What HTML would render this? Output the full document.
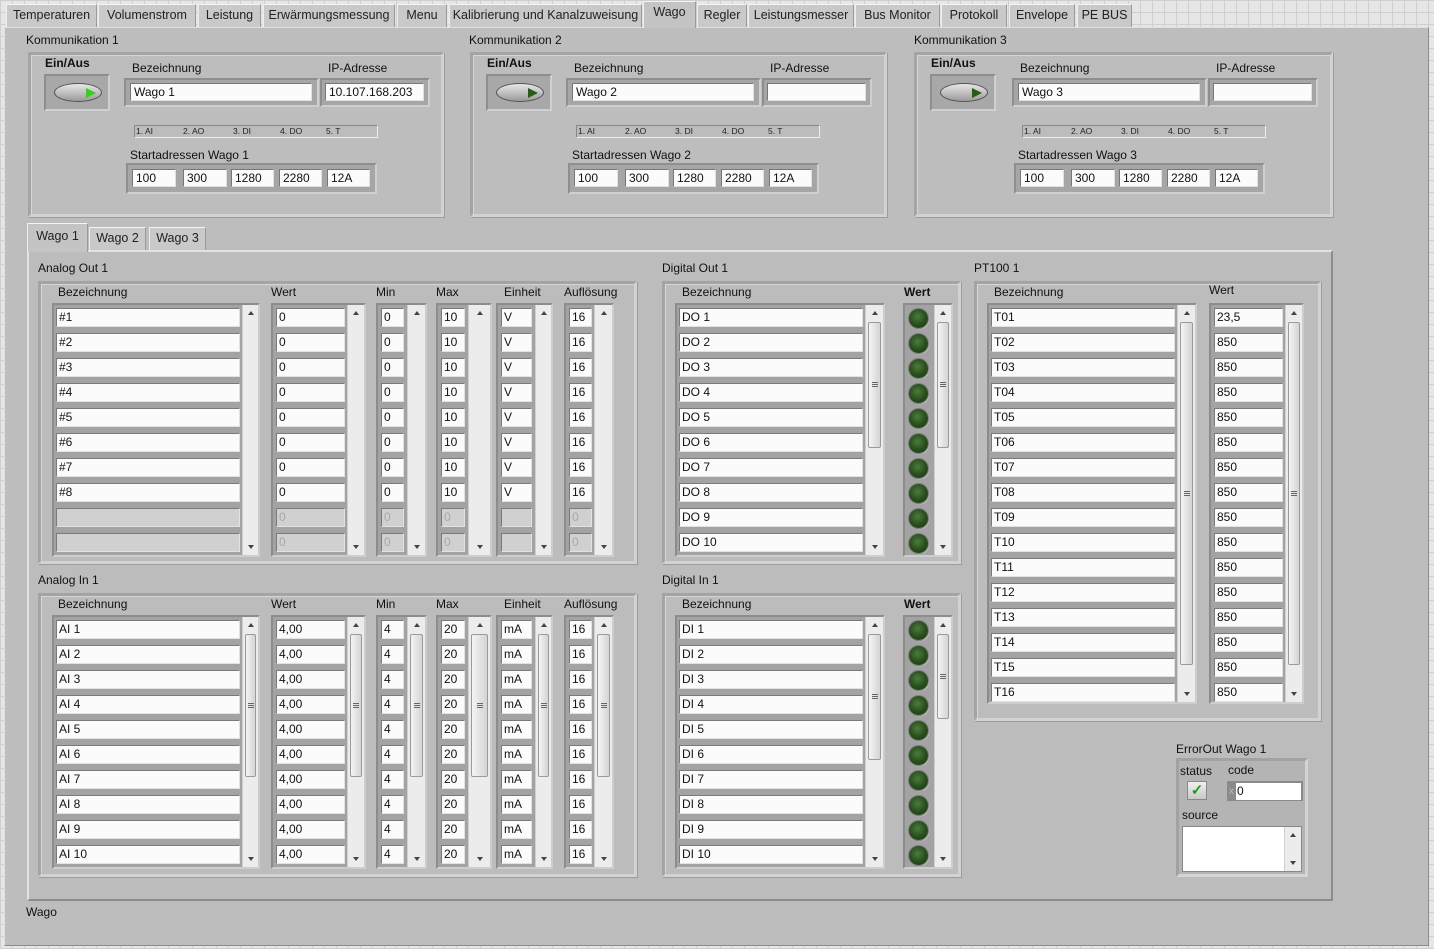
<!DOCTYPE html>
<html><head><meta charset="utf-8">
<style>
*{box-sizing:border-box;margin:0;padding:0}
body{width:1434px;height:949px;position:relative;overflow:hidden;font-family:"Liberation Sans",sans-serif;font-size:12px;color:#111;
background-color:#e6e6e6;background-image:linear-gradient(#cfcfcf 1px,transparent 1px),linear-gradient(90deg,#cfcfcf 1px,transparent 1px);background-size:12px 12px}
.a{position:absolute}
.tab{position:absolute;top:4px;height:23px;background:#c9c9c9;border:1px solid #9a9a9a;border-bottom:none;border-top-color:#f4f4f4;border-left-color:#eee;text-align:center;line-height:21px;font-size:12.5px;color:#222}
.tab.sel{top:1px;height:27px;background:#c4c4c4;z-index:2}
#main{position:absolute;left:4px;top:27px;width:1425px;height:919px;background:#bdbdbd;border:1px solid #8c8c8c;border-top-color:#e0e0e0;border-left-color:#e0e0e0}
.frm{position:absolute;border:3px solid #a4a4a4;border-right-color:#d2d2d2;border-bottom-color:#d2d2d2;box-shadow:inset 1px 1px 0 #d6d6d6,1px 1px 0 #9c9c9c}
.lb{position:absolute;font-size:12px;white-space:nowrap}
.b{font-weight:bold}
.box{position:absolute;background:#a6a6a6;border:2px solid #8e8e8e;border-right-color:#cfcfcf;border-bottom-color:#cfcfcf}
.in{position:absolute;background:#fbfbfb;border:1px solid #777;border-right-color:#e0e0e0;border-bottom-color:#e0e0e0;padding-left:3px;line-height:16px;font-size:12px;height:18px;overflow:hidden}
.col{position:absolute;background:#a3a3a3;border:2px solid #8c8c8c;border-right-color:#cdcdcd;border-bottom-color:#cdcdcd}
.col .c{position:absolute;height:19px;background:#fbfbfb;border:1px solid #7a7a7a;border-right-color:#e2e2e2;border-bottom-color:#e2e2e2;padding-left:2px;line-height:17px;font-size:12px;overflow:hidden;white-space:nowrap}
.col .c.d{background:#d0d0d0;color:#a8a8a8}
.sb{position:absolute;background:#ececec;border-left:1px solid #cfcfcf}
.sb:before{content:"";position:absolute;left:50%;top:6px;margin-left:-3px;border:3px solid transparent;border-bottom:4px solid #444;border-top:none}
.sb:after{content:"";position:absolute;left:50%;bottom:6px;margin-left:-3px;border:3px solid transparent;border-top:4px solid #444;border-bottom:none}
.th{position:absolute;left:2px;right:2px;background:linear-gradient(90deg,#f4f4f4,#d4d4d4);border:1px solid #9a9a9a;border-radius:2px}
.th i{position:absolute;left:50%;top:50%;width:6px;height:5px;margin:-3px 0 0 -3px;border-top:1px solid #666;border-bottom:1px solid #666}
.th i:after{content:"";position:absolute;left:0;right:0;top:1px;border-top:1px solid #666}
.led{position:absolute;left:4px;width:19px;height:19px;border-radius:50%;background:radial-gradient(circle at 45% 40%,#4f7a3e 0,#264d1b 55%,#183312 100%);box-shadow:0 0 0 1px #7d7d7d,1px 1px 1px #ddd}
.btnbox{position:absolute;width:66px;height:37px;background:#a8a8a8;border:2px solid #8e8e8e;border-right-color:#d0d0d0;border-bottom-color:#d0d0d0}
.pill{position:absolute;left:8px;top:7px;width:48px;height:19px;border-radius:50%;background:linear-gradient(#e8e8e8,#9a9a9a);border:1px solid #555}
.tri{position:absolute;left:31px;top:4px;border-left:10px solid #3ccc20;border-top:5px solid transparent;border-bottom:5px solid transparent}
.tri.off{border-left-color:#2a5a1a}
.strip{position:absolute;height:13px;background:#bcbcbc;border:1px solid #888;border-right-color:#eee;border-bottom-color:#eee;font-size:8.5px;line-height:11px;color:#222}
.strip span{position:absolute;top:0}
</style></head><body>

<div class="tab" style="left:6px;width:91px">Temperaturen</div>
<div class="tab" style="left:98px;width:98px">Volumenstrom</div>
<div class="tab" style="left:198px;width:63px">Leistung</div>
<div class="tab" style="left:263px;width:132px">Erwärmungsmessung</div>
<div class="tab" style="left:397px;width:50px">Menu</div>
<div class="tab" style="left:449px;width:193px">Kalibrierung und Kanalzuweisung</div>
<div class="tab sel" style="left:643px;width:53px">Wago</div>
<div class="tab" style="left:697px;width:50px">Regler</div>
<div class="tab" style="left:748px;width:106px">Leistungsmesser</div>
<div class="tab" style="left:855px;width:85px">Bus Monitor</div>
<div class="tab" style="left:941px;width:66px">Protokoll</div>
<div class="tab" style="left:1009px;width:66px">Envelope</div>
<div class="tab" style="left:1077px;width:55px">PE BUS</div>

<div id="main"></div>

<!-- Kommunikation groups -->
<div class="lb" style="left:26px;top:33px">Kommunikation 1</div>
<div class="frm" style="left:28px;top:52px;width:416px;height:165px"></div>
<div class="lb b" style="left:45px;top:56px">Ein/Aus</div>
<div class="btnbox" style="left:44px;top:74px"><div class="pill"><div class="tri"></div></div></div>
<div class="lb" style="left:132px;top:61px">Bezeichnung</div>
<div class="box" style="left:124px;top:78px;width:195px;height:29px"></div>
<div class="in" style="left:130px;top:83px;width:182px">Wago 1</div>
<div class="lb" style="left:328px;top:61px">IP-Adresse</div>
<div class="box" style="left:320px;top:78px;width:110px;height:29px"></div>
<div class="in" style="left:325px;top:83px;width:99px">10.107.168.203</div>
<div class="strip" style="left:134px;top:125px;width:244px"><span style="left:1px">1. AI</span><span style="left:48px">2. AO</span><span style="left:98px">3. DI</span><span style="left:145px">4. DO</span><span style="left:191px">5. T</span></div>
<div class="lb" style="left:130px;top:148px">Startadressen Wago 1</div>
<div class="box" style="left:126px;top:163px;width:251px;height:31px"></div>
<div class="in" style="left:132px;top:169px;width:44px">100</div>
<div class="in" style="left:183px;top:169px;width:44px">300</div>
<div class="in" style="left:231px;top:169px;width:43px">1280</div>
<div class="in" style="left:279px;top:169px;width:43px">2280</div>
<div class="in" style="left:327px;top:169px;width:43px">12A</div>

<div class="lb" style="left:469px;top:33px">Kommunikation 2</div>
<div class="frm" style="left:470px;top:52px;width:417px;height:165px"></div>
<div class="lb b" style="left:487px;top:56px">Ein/Aus</div>
<div class="btnbox" style="left:486px;top:74px"><div class="pill"><div class="tri off"></div></div></div>
<div class="lb" style="left:574px;top:61px">Bezeichnung</div>
<div class="box" style="left:566px;top:78px;width:195px;height:29px"></div>
<div class="in" style="left:572px;top:83px;width:182px">Wago 2</div>
<div class="lb" style="left:770px;top:61px">IP-Adresse</div>
<div class="box" style="left:762px;top:78px;width:110px;height:29px"></div>
<div class="in" style="left:767px;top:83px;width:99px"></div>
<div class="strip" style="left:576px;top:125px;width:244px"><span style="left:1px">1. AI</span><span style="left:48px">2. AO</span><span style="left:98px">3. DI</span><span style="left:145px">4. DO</span><span style="left:191px">5. T</span></div>
<div class="lb" style="left:572px;top:148px">Startadressen Wago 2</div>
<div class="box" style="left:568px;top:163px;width:251px;height:31px"></div>
<div class="in" style="left:574px;top:169px;width:44px">100</div>
<div class="in" style="left:625px;top:169px;width:44px">300</div>
<div class="in" style="left:673px;top:169px;width:43px">1280</div>
<div class="in" style="left:721px;top:169px;width:43px">2280</div>
<div class="in" style="left:769px;top:169px;width:43px">12A</div>

<div class="lb" style="left:914px;top:33px">Kommunikation 3</div>
<div class="frm" style="left:914px;top:52px;width:419px;height:165px"></div>
<div class="lb b" style="left:931px;top:56px">Ein/Aus</div>
<div class="btnbox" style="left:930px;top:74px"><div class="pill"><div class="tri off"></div></div></div>
<div class="lb" style="left:1020px;top:61px">Bezeichnung</div>
<div class="box" style="left:1012px;top:78px;width:195px;height:29px"></div>
<div class="in" style="left:1018px;top:83px;width:182px">Wago 3</div>
<div class="lb" style="left:1216px;top:61px">IP-Adresse</div>
<div class="box" style="left:1208px;top:78px;width:110px;height:29px"></div>
<div class="in" style="left:1213px;top:83px;width:99px"></div>
<div class="strip" style="left:1022px;top:125px;width:244px"><span style="left:1px">1. AI</span><span style="left:48px">2. AO</span><span style="left:98px">3. DI</span><span style="left:145px">4. DO</span><span style="left:191px">5. T</span></div>
<div class="lb" style="left:1018px;top:148px">Startadressen Wago 3</div>
<div class="box" style="left:1014px;top:163px;width:251px;height:31px"></div>
<div class="in" style="left:1020px;top:169px;width:44px">100</div>
<div class="in" style="left:1071px;top:169px;width:44px">300</div>
<div class="in" style="left:1119px;top:169px;width:43px">1280</div>
<div class="in" style="left:1167px;top:169px;width:43px">2280</div>
<div class="in" style="left:1215px;top:169px;width:43px">12A</div>

<!-- inner tab control -->
<div class="a" style="left:27px;top:250px;width:1306px;height:651px;background:#bcbcbc;border:2px solid #e2e2e2;border-right-color:#8c8c8c;border-bottom-color:#8c8c8c"></div>
<div class="tab sel" style="left:27px;top:223px;width:61px;height:29px;line-height:24px">Wago 1</div>
<div class="tab" style="left:89px;top:227px;width:57px">Wago 2</div>
<div class="tab" style="left:149px;top:227px;width:57px">Wago 3</div>

<!-- Analog Out 1 -->
<div class="lb" style="left:38px;top:261px">Analog Out 1</div>
<div class="frm" style="left:38px;top:281px;width:599px;height:283px"></div>
<div class="lb" style="left:58px;top:285px">Bezeichnung</div>
<div class="lb" style="left:271px;top:285px">Wert</div>
<div class="lb" style="left:376px;top:285px">Min</div>
<div class="lb" style="left:436px;top:285px">Max</div>
<div class="lb" style="left:504px;top:285px">Einheit</div>
<div class="lb" style="left:564px;top:285px">Auflösung</div>

<div class="col" style="left:52px;top:303px;width:208px;height:254px">
<div class="c" style="left:2px;top:3px;width:184px">#1</div><div class="c" style="left:2px;top:28px;width:184px">#2</div><div class="c" style="left:2px;top:53px;width:184px">#3</div><div class="c" style="left:2px;top:78px;width:184px">#4</div><div class="c" style="left:2px;top:103px;width:184px">#5</div><div class="c" style="left:2px;top:128px;width:184px">#6</div><div class="c" style="left:2px;top:153px;width:184px">#7</div><div class="c" style="left:2px;top:178px;width:184px">#8</div><div class="c d" style="left:2px;top:203px;width:184px"></div><div class="c d" style="left:2px;top:228px;width:184px"></div>
<div class="sb" style="left:188px;top:0;width:16px;height:250px"></div></div>

<div class="col" style="left:271px;top:303px;width:95px;height:254px">
<div class="c" style="left:3px;top:3px;width:69px">0</div><div class="c" style="left:3px;top:28px;width:69px">0</div><div class="c" style="left:3px;top:53px;width:69px">0</div><div class="c" style="left:3px;top:78px;width:69px">0</div><div class="c" style="left:3px;top:103px;width:69px">0</div><div class="c" style="left:3px;top:128px;width:69px">0</div><div class="c" style="left:3px;top:153px;width:69px">0</div><div class="c" style="left:3px;top:178px;width:69px">0</div><div class="c d" style="left:3px;top:203px;width:69px">0</div><div class="c d" style="left:3px;top:228px;width:69px">0</div>
<div class="sb" style="left:74px;top:0;width:17px;height:250px"></div></div>

<div class="col" style="left:376px;top:303px;width:51px;height:254px">
<div class="c" style="left:3px;top:3px;width:23px">0</div><div class="c" style="left:3px;top:28px;width:23px">0</div><div class="c" style="left:3px;top:53px;width:23px">0</div><div class="c" style="left:3px;top:78px;width:23px">0</div><div class="c" style="left:3px;top:103px;width:23px">0</div><div class="c" style="left:3px;top:128px;width:23px">0</div><div class="c" style="left:3px;top:153px;width:23px">0</div><div class="c" style="left:3px;top:178px;width:23px">0</div><div class="c d" style="left:3px;top:203px;width:23px">0</div><div class="c d" style="left:3px;top:228px;width:23px">0</div>
<div class="sb" style="left:29px;top:0;width:18px;height:250px"></div></div>

<div class="col" style="left:436px;top:303px;width:56px;height:254px">
<div class="c" style="left:3px;top:3px;width:24px">10</div><div class="c" style="left:3px;top:28px;width:24px">10</div><div class="c" style="left:3px;top:53px;width:24px">10</div><div class="c" style="left:3px;top:78px;width:24px">10</div><div class="c" style="left:3px;top:103px;width:24px">10</div><div class="c" style="left:3px;top:128px;width:24px">10</div><div class="c" style="left:3px;top:153px;width:24px">10</div><div class="c" style="left:3px;top:178px;width:24px">10</div><div class="c d" style="left:3px;top:203px;width:24px">0</div><div class="c d" style="left:3px;top:228px;width:24px">0</div>
<div class="sb" style="left:30px;top:0;width:22px;height:250px"></div></div>

<div class="col" style="left:496px;top:303px;width:57px;height:254px">
<div class="c" style="left:3px;top:3px;width:31px">V</div><div class="c" style="left:3px;top:28px;width:31px">V</div><div class="c" style="left:3px;top:53px;width:31px">V</div><div class="c" style="left:3px;top:78px;width:31px">V</div><div class="c" style="left:3px;top:103px;width:31px">V</div><div class="c" style="left:3px;top:128px;width:31px">V</div><div class="c" style="left:3px;top:153px;width:31px">V</div><div class="c" style="left:3px;top:178px;width:31px">V</div><div class="c d" style="left:3px;top:203px;width:31px"></div><div class="c d" style="left:3px;top:228px;width:31px"></div>
<div class="sb" style="left:37px;top:0;width:16px;height:250px"></div></div>

<div class="col" style="left:564px;top:303px;width:50px;height:254px">
<div class="c" style="left:3px;top:3px;width:23px">16</div><div class="c" style="left:3px;top:28px;width:23px">16</div><div class="c" style="left:3px;top:53px;width:23px">16</div><div class="c" style="left:3px;top:78px;width:23px">16</div><div class="c" style="left:3px;top:103px;width:23px">16</div><div class="c" style="left:3px;top:128px;width:23px">16</div><div class="c" style="left:3px;top:153px;width:23px">16</div><div class="c" style="left:3px;top:178px;width:23px">16</div><div class="c d" style="left:3px;top:203px;width:23px">0</div><div class="c d" style="left:3px;top:228px;width:23px">0</div>
<div class="sb" style="left:28px;top:0;width:18px;height:250px"></div></div>

<!-- Analog In 1 -->
<div class="lb" style="left:38px;top:573px">Analog In 1</div>
<div class="frm" style="left:38px;top:593px;width:599px;height:284px"></div>
<div class="lb" style="left:58px;top:597px">Bezeichnung</div>
<div class="lb" style="left:271px;top:597px">Wert</div>
<div class="lb" style="left:376px;top:597px">Min</div>
<div class="lb" style="left:436px;top:597px">Max</div>
<div class="lb" style="left:504px;top:597px">Einheit</div>
<div class="lb" style="left:564px;top:597px">Auflösung</div>

<div class="col" style="left:52px;top:615px;width:208px;height:254px">
<div class="c" style="left:2px;top:3px;width:184px">AI 1</div><div class="c" style="left:2px;top:28px;width:184px">AI 2</div><div class="c" style="left:2px;top:53px;width:184px">AI 3</div><div class="c" style="left:2px;top:78px;width:184px">AI 4</div><div class="c" style="left:2px;top:103px;width:184px">AI 5</div><div class="c" style="left:2px;top:128px;width:184px">AI 6</div><div class="c" style="left:2px;top:153px;width:184px">AI 7</div><div class="c" style="left:2px;top:178px;width:184px">AI 8</div><div class="c" style="left:2px;top:203px;width:184px">AI 9</div><div class="c" style="left:2px;top:228px;width:184px">AI 10</div>
<div class="sb" style="left:188px;top:0;width:16px;height:250px"><div class="th" style="top:17px;height:143px"><i></i></div></div></div>

<div class="col" style="left:271px;top:615px;width:95px;height:254px">
<div class="c" style="left:3px;top:3px;width:69px">4,00</div><div class="c" style="left:3px;top:28px;width:69px">4,00</div><div class="c" style="left:3px;top:53px;width:69px">4,00</div><div class="c" style="left:3px;top:78px;width:69px">4,00</div><div class="c" style="left:3px;top:103px;width:69px">4,00</div><div class="c" style="left:3px;top:128px;width:69px">4,00</div><div class="c" style="left:3px;top:153px;width:69px">4,00</div><div class="c" style="left:3px;top:178px;width:69px">4,00</div><div class="c" style="left:3px;top:203px;width:69px">4,00</div><div class="c" style="left:3px;top:228px;width:69px">4,00</div>
<div class="sb" style="left:74px;top:0;width:17px;height:250px"><div class="th" style="top:17px;height:143px"><i></i></div></div></div>

<div class="col" style="left:376px;top:615px;width:51px;height:254px">
<div class="c" style="left:3px;top:3px;width:23px">4</div><div class="c" style="left:3px;top:28px;width:23px">4</div><div class="c" style="left:3px;top:53px;width:23px">4</div><div class="c" style="left:3px;top:78px;width:23px">4</div><div class="c" style="left:3px;top:103px;width:23px">4</div><div class="c" style="left:3px;top:128px;width:23px">4</div><div class="c" style="left:3px;top:153px;width:23px">4</div><div class="c" style="left:3px;top:178px;width:23px">4</div><div class="c" style="left:3px;top:203px;width:23px">4</div><div class="c" style="left:3px;top:228px;width:23px">4</div>
<div class="sb" style="left:29px;top:0;width:18px;height:250px"><div class="th" style="top:17px;height:143px"><i></i></div></div></div>

<div class="col" style="left:436px;top:615px;width:56px;height:254px">
<div class="c" style="left:3px;top:3px;width:24px">20</div><div class="c" style="left:3px;top:28px;width:24px">20</div><div class="c" style="left:3px;top:53px;width:24px">20</div><div class="c" style="left:3px;top:78px;width:24px">20</div><div class="c" style="left:3px;top:103px;width:24px">20</div><div class="c" style="left:3px;top:128px;width:24px">20</div><div class="c" style="left:3px;top:153px;width:24px">20</div><div class="c" style="left:3px;top:178px;width:24px">20</div><div class="c" style="left:3px;top:203px;width:24px">20</div><div class="c" style="left:3px;top:228px;width:24px">20</div>
<div class="sb" style="left:30px;top:0;width:22px;height:250px"><div class="th" style="top:17px;height:143px"><i></i></div></div></div>

<div class="col" style="left:496px;top:615px;width:57px;height:254px">
<div class="c" style="left:3px;top:3px;width:31px">mA</div><div class="c" style="left:3px;top:28px;width:31px">mA</div><div class="c" style="left:3px;top:53px;width:31px">mA</div><div class="c" style="left:3px;top:78px;width:31px">mA</div><div class="c" style="left:3px;top:103px;width:31px">mA</div><div class="c" style="left:3px;top:128px;width:31px">mA</div><div class="c" style="left:3px;top:153px;width:31px">mA</div><div class="c" style="left:3px;top:178px;width:31px">mA</div><div class="c" style="left:3px;top:203px;width:31px">mA</div><div class="c" style="left:3px;top:228px;width:31px">mA</div>
<div class="sb" style="left:37px;top:0;width:16px;height:250px"><div class="th" style="top:17px;height:143px"><i></i></div></div></div>

<div class="col" style="left:564px;top:615px;width:50px;height:254px">
<div class="c" style="left:3px;top:3px;width:23px">16</div><div class="c" style="left:3px;top:28px;width:23px">16</div><div class="c" style="left:3px;top:53px;width:23px">16</div><div class="c" style="left:3px;top:78px;width:23px">16</div><div class="c" style="left:3px;top:103px;width:23px">16</div><div class="c" style="left:3px;top:128px;width:23px">16</div><div class="c" style="left:3px;top:153px;width:23px">16</div><div class="c" style="left:3px;top:178px;width:23px">16</div><div class="c" style="left:3px;top:203px;width:23px">16</div><div class="c" style="left:3px;top:228px;width:23px">16</div>
<div class="sb" style="left:28px;top:0;width:18px;height:250px"><div class="th" style="top:17px;height:143px"><i></i></div></div></div>

<!-- Digital Out 1 -->
<div class="lb" style="left:662px;top:261px">Digital Out 1</div>
<div class="frm" style="left:662px;top:281px;width:299px;height:283px"></div>
<div class="lb" style="left:682px;top:285px">Bezeichnung</div>
<div class="lb b" style="left:904px;top:285px">Wert</div>
<div class="col" style="left:675px;top:303px;width:210px;height:254px">
<div class="c" style="left:2px;top:3px;width:184px">DO 1</div><div class="c" style="left:2px;top:28px;width:184px">DO 2</div><div class="c" style="left:2px;top:53px;width:184px">DO 3</div><div class="c" style="left:2px;top:78px;width:184px">DO 4</div><div class="c" style="left:2px;top:103px;width:184px">DO 5</div><div class="c" style="left:2px;top:128px;width:184px">DO 6</div><div class="c" style="left:2px;top:153px;width:184px">DO 7</div><div class="c" style="left:2px;top:178px;width:184px">DO 8</div><div class="c" style="left:2px;top:203px;width:184px">DO 9</div><div class="c" style="left:2px;top:228px;width:184px">DO 10</div>
<div class="sb" style="left:188px;top:0;width:18px;height:250px"><div class="th" style="top:17px;height:126px"><i></i></div></div></div>
<div class="col" style="left:903px;top:303px;width:50px;height:254px">
<div class="led" style="top:4px"></div><div class="led" style="top:29px"></div><div class="led" style="top:54px"></div><div class="led" style="top:79px"></div><div class="led" style="top:104px"></div><div class="led" style="top:129px"></div><div class="led" style="top:154px"></div><div class="led" style="top:179px"></div><div class="led" style="top:204px"></div><div class="led" style="top:229px"></div>
<div class="sb" style="left:29px;top:0;width:17px;height:250px"><div class="th" style="top:17px;height:126px"><i></i></div></div></div>

<!-- Digital In 1 -->
<div class="lb" style="left:662px;top:573px">Digital In 1</div>
<div class="frm" style="left:662px;top:593px;width:299px;height:284px"></div>
<div class="lb" style="left:682px;top:597px">Bezeichnung</div>
<div class="lb b" style="left:904px;top:597px">Wert</div>
<div class="col" style="left:675px;top:615px;width:210px;height:254px">
<div class="c" style="left:2px;top:3px;width:184px">DI 1</div><div class="c" style="left:2px;top:28px;width:184px">DI 2</div><div class="c" style="left:2px;top:53px;width:184px">DI 3</div><div class="c" style="left:2px;top:78px;width:184px">DI 4</div><div class="c" style="left:2px;top:103px;width:184px">DI 5</div><div class="c" style="left:2px;top:128px;width:184px">DI 6</div><div class="c" style="left:2px;top:153px;width:184px">DI 7</div><div class="c" style="left:2px;top:178px;width:184px">DI 8</div><div class="c" style="left:2px;top:203px;width:184px">DI 9</div><div class="c" style="left:2px;top:228px;width:184px">DI 10</div>
<div class="sb" style="left:188px;top:0;width:18px;height:250px"><div class="th" style="top:17px;height:126px"><i></i></div></div></div>
<div class="col" style="left:903px;top:615px;width:50px;height:254px">
<div class="led" style="top:4px"></div><div class="led" style="top:29px"></div><div class="led" style="top:54px"></div><div class="led" style="top:79px"></div><div class="led" style="top:104px"></div><div class="led" style="top:129px"></div><div class="led" style="top:154px"></div><div class="led" style="top:179px"></div><div class="led" style="top:204px"></div><div class="led" style="top:229px"></div>
<div class="sb" style="left:29px;top:0;width:17px;height:250px"><div class="th" style="top:17px;height:85px"><i></i></div></div></div>

<!-- PT100 1 -->
<div class="lb" style="left:974px;top:261px">PT100 1</div>
<div class="frm" style="left:974px;top:281px;width:347px;height:440px"></div>
<div class="lb" style="left:994px;top:285px">Bezeichnung</div>
<div class="lb" style="left:1209px;top:283px">Wert</div>
<div class="col" style="left:987px;top:303px;width:210px;height:401px">
<div class="c" style="left:2px;top:3px;width:184px">T01</div><div class="c" style="left:2px;top:28px;width:184px">T02</div><div class="c" style="left:2px;top:53px;width:184px">T03</div><div class="c" style="left:2px;top:78px;width:184px">T04</div><div class="c" style="left:2px;top:103px;width:184px">T05</div><div class="c" style="left:2px;top:128px;width:184px">T06</div><div class="c" style="left:2px;top:153px;width:184px">T07</div><div class="c" style="left:2px;top:178px;width:184px">T08</div><div class="c" style="left:2px;top:203px;width:184px">T09</div><div class="c" style="left:2px;top:228px;width:184px">T10</div><div class="c" style="left:2px;top:253px;width:184px">T11</div><div class="c" style="left:2px;top:278px;width:184px">T12</div><div class="c" style="left:2px;top:303px;width:184px">T13</div><div class="c" style="left:2px;top:328px;width:184px">T14</div><div class="c" style="left:2px;top:353px;width:184px">T15</div><div class="c" style="left:2px;top:378px;width:184px">T16</div>
<div class="sb" style="left:188px;top:0;width:18px;height:397px"><div class="th" style="top:17px;height:343px"><i></i></div></div></div>
<div class="col" style="left:1209px;top:303px;width:95px;height:401px">
<div class="c" style="left:3px;top:3px;width:69px">23,5</div><div class="c" style="left:3px;top:28px;width:69px">850</div><div class="c" style="left:3px;top:53px;width:69px">850</div><div class="c" style="left:3px;top:78px;width:69px">850</div><div class="c" style="left:3px;top:103px;width:69px">850</div><div class="c" style="left:3px;top:128px;width:69px">850</div><div class="c" style="left:3px;top:153px;width:69px">850</div><div class="c" style="left:3px;top:178px;width:69px">850</div><div class="c" style="left:3px;top:203px;width:69px">850</div><div class="c" style="left:3px;top:228px;width:69px">850</div><div class="c" style="left:3px;top:253px;width:69px">850</div><div class="c" style="left:3px;top:278px;width:69px">850</div><div class="c" style="left:3px;top:303px;width:69px">850</div><div class="c" style="left:3px;top:328px;width:69px">850</div><div class="c" style="left:3px;top:353px;width:69px">850</div><div class="c" style="left:3px;top:378px;width:69px">850</div>
<div class="sb" style="left:74px;top:0;width:17px;height:397px"><div class="th" style="top:17px;height:343px"><i></i></div></div></div>

<!-- ErrorOut -->
<div class="lb" style="left:1176px;top:742px">ErrorOut Wago 1</div>
<div class="a" style="left:1176px;top:758px;width:132px;height:119px;background:#b4b4b4;border:3px solid #a2a2a2;border-right-color:#d4d4d4;border-bottom-color:#d4d4d4"></div>
<div class="lb" style="left:1180px;top:764px">status</div>
<div class="lb" style="left:1228px;top:763px">code</div>
<div class="a" style="left:1187px;top:781px;width:20px;height:19px;background:linear-gradient(#f0f0f0,#c8c8c8);border:1px solid #888;color:#1aa01a;font-size:15px;line-height:17px;text-align:center;font-weight:bold">✓</div>
<div class="a" style="left:1227px;top:781px;width:76px;height:20px;background:#8a8a8a"></div>
<div class="a" style="left:1236px;top:783px;width:65px;height:17px;background:#fff;line-height:17px;font-size:12px;padding-left:1px">0</div>
<div class="a" style="left:1229px;top:783px;font-size:10px;color:#bbb;line-height:17px">x</div>
<div class="lb" style="left:1182px;top:808px">source</div>
<div class="a" style="left:1182px;top:826px;width:120px;height:46px;background:#fff;border:1px solid #888"></div>
<div class="sb" style="left:1284px;top:827px;width:17px;height:44px"></div>

<div class="lb" style="left:26px;top:905px">Wago</div>
</body></html>
